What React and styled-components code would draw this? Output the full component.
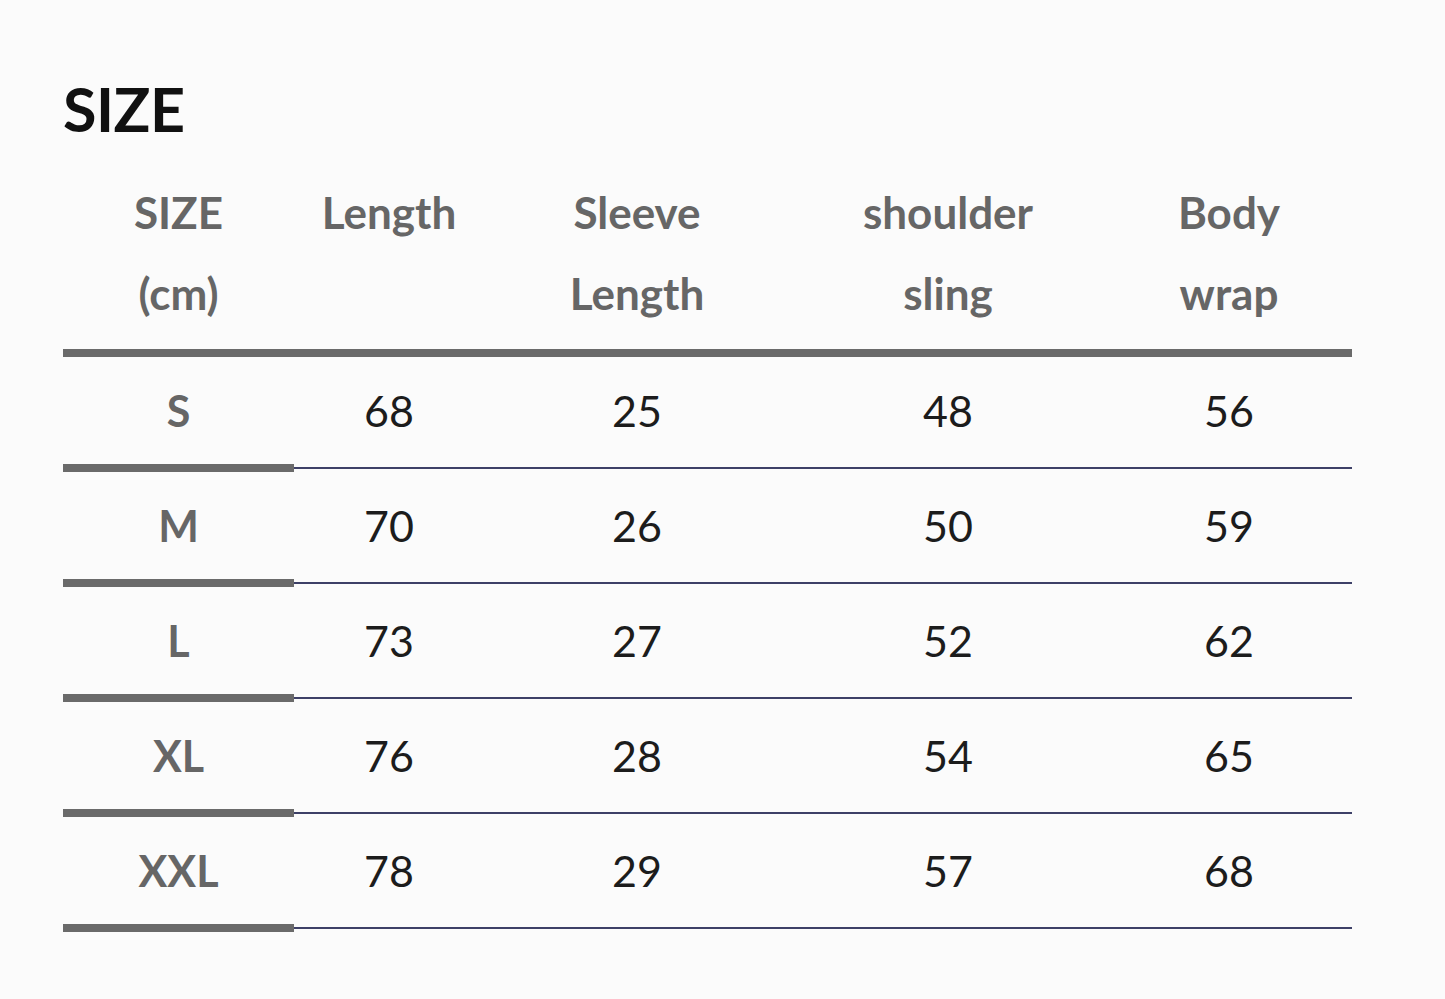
import React from 'react';
import styled, { createGlobalStyle } from 'styled-components';

const GlobalStyle = createGlobalStyle`
  html, body {
    margin: 0;
    padding: 0;
    background: #fbfbfb;
  }
  body {
    font-family: Lato, "Noto Sans", "Liberation Sans", sans-serif;
  }
`;

const Page = styled.div`
  width: 1445px;
  height: 999px;
  box-sizing: border-box;
  padding: 78px 0 0 63px;
  background: #fbfbfb;
`;

const Title = styled.h1`
  margin: 0;
  font-size: 61px;
  line-height: 1;
  font-weight: 700;
  color: #111;
  letter-spacing: -0.5px;
`;

const Table = styled.div`
  width: 1289px;
  margin-top: 33px;
`;

const COLUMNS = '231px 190px 306px 316px 246px';

const HeaderRow = styled.div`
  display: grid;
  grid-template-columns: ${COLUMNS};
  padding-bottom: 15px;
`;

const HeadCell = styled.div`
  text-align: center;
  font-size: 44px;
  line-height: 81px;
  font-weight: 700;
  color: #666;
`;

const Row = styled.div`
  display: grid;
  grid-template-columns: ${COLUMNS};
  height: 107px;
  align-items: center;
`;

const Cell = styled.div`
  text-align: center;
  font-size: 43px;
  line-height: 1;
  font-weight: ${({ $label }) => ($label ? 700 : 400)};
  color: ${({ $label }) => ($label ? '#666' : '#1c1c1c')};
`;

const Rule = styled.div`
  display: flex;
  align-items: center;
  height: 8px;
`;

const ThickBar = styled.div`
  height: 8px;
  width: ${({ $full }) => ($full ? '100%' : '231px')};
  background: #6a6a6a;
  flex: ${({ $full }) => ($full ? 1 : 'none')};
`;

const ThinBar = styled.div`
  flex: 1;
  height: 2px;
  background: #3d4067;
`;

const headers = [
  ['SIZE', '(cm)'],
  ['Length'],
  ['Sleeve', 'Length'],
  ['shoulder', 'sling'],
  ['Body', 'wrap'],
];

const rows = [
  ['S', 68, 25, 48, 56],
  ['M', 70, 26, 50, 59],
  ['L', 73, 27, 52, 62],
  ['XL', 76, 28, 54, 65],
  ['XXL', 78, 29, 57, 68],
];

const App = () => (
  <Page>
    <GlobalStyle />
    <Title>SIZE</Title>
    <Table>
      <HeaderRow>
        {headers.map((lines, i) => (
          <HeadCell key={i}>
            {lines.map((line) => (
              <div key={line}>{line}</div>
            ))}
          </HeadCell>
        ))}
      </HeaderRow>
      <Rule>
        <ThickBar $full />
      </Rule>
      {rows.map(([size, ...values]) => (
        <React.Fragment key={size}>
          <Row>
            <Cell $label>{size}</Cell>
            {values.map((v, i) => (
              <Cell key={i}>{v}</Cell>
            ))}
          </Row>
          <Rule>
            <ThickBar />
            <ThinBar />
          </Rule>
        </React.Fragment>
      ))}
    </Table>
  </Page>
);

export default App;
